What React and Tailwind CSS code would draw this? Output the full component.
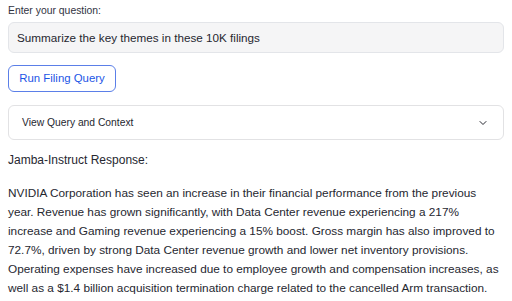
import { ChevronDown } from 'lucide-react';

const responseText =
  'NVIDIA Corporation has seen an increase in their financial performance from the previous year. Revenue has grown significantly, with Data Center revenue experiencing a 217% increase and Gaming revenue experiencing a 15% boost. Gross margin has also improved to 72.7%, driven by strong Data Center revenue growth and lower net inventory provisions. Operating expenses have increased due to employee growth and compensation increases, as well as a $1.4 billion acquisition termination charge related to the cancelled Arm transaction.';

export default function App() {
  return (
    <div className="w-[512px] h-[301px] overflow-hidden bg-white px-2 pt-1 text-[#262730] font-['Liberation_Sans',Arial,sans-serif]">
      {/* Question input */}
      <label className="block text-[10.4px] leading-[14px] text-[#31333f]">Enter your question:</label>
      <div className="mt-1 h-[31px] rounded-md border border-[#e3e5e9] bg-[#f5f5f6] px-2 flex items-center text-[11.7px] text-[#262730]">
        Summarize the key themes in these 10K filings
      </div>

      {/* Run button */}
      <button className="mt-3 h-[27px] w-[108px] rounded-md border border-[#5b7fe8] bg-white text-[11.4px] text-[#1b55e6] flex items-center justify-center">
        Run Filing Query
      </button>

      {/* Expander */}
      <div className="mt-[13px] h-[35px] rounded-md border border-[#e2e2e4] flex items-center justify-between pl-[13px] pr-[14px]">
        <span className="text-[10.3px] text-[#262730]">View Query and Context</span>
        <ChevronDown size={12} strokeWidth={2} className="text-[#262730]" />
      </div>

      {/* Response */}
      <p className="mt-[12px] text-[12px] leading-[16px]">Jamba-Instruct Response:</p>
      <p className="mt-[16px] text-[11.8px] leading-[19px]">{responseText}</p>
    </div>
  );
}
